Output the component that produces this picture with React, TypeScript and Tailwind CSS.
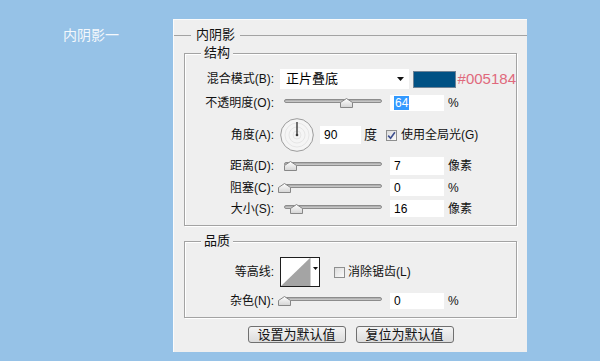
const FONT = "font-['Liberation_Sans','Noto_Sans_CJK_SC',sans-serif]";

function Thumb() {
  return (
    <svg width="13" height="10" viewBox="0 0 13 10" className="absolute top-[1px]">
      <defs>
        <linearGradient id="tg" x1="0" y1="0" x2="0" y2="1">
          <stop offset="0" stopColor="#ffffff" />
          <stop offset="1" stopColor="#d4d4d4" />
        </linearGradient>
      </defs>
      <polygon points="0.5,9.5 0.5,4.5 6.5,0.5 12.5,4.5 12.5,9.5" fill="url(#tg)" stroke="#878787" />
    </svg>
  );
}

// slider: 106px wide, track starts 6px in, thumb centre at `at`
function Slider({ at }: { at: number }) {
  return (
    <div className="relative ml-[4px] h-[12px] w-[106px] shrink-0">
      <div className="absolute left-[6px] top-[2px] h-[4px] w-[98px] rounded-[2px] border border-[#8c8c8c] bg-gradient-to-b from-[#a8a8a8] to-[#cfcfcf]" />
      <div className="absolute top-0 h-full" style={{ left: at - 6 }}>
        <Thumb />
      </div>
    </div>
  );
}

function Field({ value, h = 17, w = 54, ml = 6, selected = false }: { value: string; h?: number; w?: number; ml?: number; selected?: boolean }) {
  return (
    <div
      className="flex shrink-0 items-center bg-white pl-[4px] text-[12px] text-black"
      style={{ height: h, width: w, marginLeft: ml }}
    >
      {selected ? <span className="bg-[#3399ff] px-[1px] leading-[14px] text-white">{value}</span> : value}
    </div>
  );
}

function Label({ children }: { children: React.ReactNode }) {
  return <div className="w-[89px] shrink-0 text-right text-[12px] text-[#111]">{children}</div>;
}

function Unit({ children }: { children: React.ReactNode }) {
  return <div className="ml-[4px] text-[12px] text-[#111]">{children}</div>;
}

function Check({ on }: { on?: boolean }) {
  return (
    <div className="flex h-[11px] w-[11px] shrink-0 items-center justify-center border border-[#8e8f8f] bg-gradient-to-br from-[#dcdcdc] to-[#fbfbfb]">
      {on && (
        <svg width="9" height="9" viewBox="0 0 9 9">
          <path d="M1.2 4.6 L3.6 7.3 L7.9 1.2" fill="none" stroke="#3d4f8f" strokeWidth="1.6" />
        </svg>
      )}
    </div>
  );
}

function Group({ title, className, children }: { title: string; className?: string; children: React.ReactNode }) {
  return (
    <div className={`relative mx-[10px] border border-[#a3a3a3] shadow-[1px_1px_0_#fff,inset_1px_1px_0_#fff] ${className ?? ''}`}>
      <span className="absolute left-[16px] top-[-9px] bg-[#efefef] px-[3px] text-[13px] leading-[16px] text-[#111]">
        {title}
      </span>
      {children}
    </div>
  );
}

export default function App() {
  return (
    <div className={`flex h-[361px] w-[600px] bg-[#96c2e7] ${FONT}`}>
      <div className="w-[173px] shrink-0 pl-[63px] pt-[26px] text-[14px] leading-[18px] text-[#f4f8fc]">内阴影一</div>

      <div className="mt-[19px] flex h-[333px] w-[354px] shrink-0 flex-col border-l border-t border-[#fbfbfb] bg-[#efefef]">
        {/* heading */}
        <div className="mt-[7px] flex h-[16px] items-center">
          <div className="h-px w-[17px] bg-[#a3a3a3]" />
          <span className="mx-[5px] text-[13px] leading-[16px] text-[#111]">内阴影</span>
          <div className="h-px flex-1 bg-[#a3a3a3]" />
        </div>

        <Group title="结构" className="mt-[10px] pb-[8px] pt-[15px]">
          {/* blend mode */}
          <div className="flex h-[20px] items-center">
            <Label>混合模式(B):</Label>
            <div className="ml-[6px] flex h-[20px] w-[131px] items-center justify-between bg-white pl-[6px] pr-[5px] text-[13px] text-black">
              <span>正片叠底</span>
              <svg width="7" height="4" viewBox="0 0 7 4">
                <polygon points="0,0 7,0 3.5,4" fill="#111" />
              </svg>
            </div>
            <div className="ml-[4px] h-[17px] w-[43px] border border-[#6f8396] bg-[#005184]" />
            <span className="ml-[2px] text-[15px] leading-[18px] text-[#e0697c]">#005184</span>
          </div>

          {/* opacity */}
          <div className="mt-[6px] flex h-[16px] items-center">
            <Label>不透明度(O):</Label>
            <Slider at={68} />
            <Field value="64" h={16} selected />
            <Unit>%</Unit>
          </div>

          {/* angle */}
          <div className="mt-[7px] flex h-[34px] items-center">
            <Label>角度(A):</Label>
            <svg width="34" height="34" viewBox="0 0 34 34" className="ml-[6px] shrink-0">
              <circle cx="17" cy="17" r="16.3" fill="#f5f5f5" stroke="#9b9b9b" />
              <circle cx="17" cy="17" r="12" fill="none" stroke="#e6e6e6" />
              <circle cx="17" cy="17" r="8" fill="none" stroke="#e6e6e6" />
              <circle cx="17" cy="17" r="4" fill="none" stroke="#e6e6e6" />
              <line x1="17" y1="17" x2="17" y2="4" stroke="#3a3a3a" strokeWidth="1.4" />
              <circle cx="17" cy="17" r="1.3" fill="#3a3a3a" />
            </svg>
            <Field value="90" h={18} w={41} />
            <span className="ml-[3px] text-[13px] text-[#111]">度</span>
            <div className="ml-[9px] flex items-center">
              <Check on />
              <span className="ml-[4px] text-[12px] text-[#111]">使用全局光(G)</span>
            </div>
          </div>

          {/* distance */}
          <div className="mt-[5px] flex h-[18px] items-center">
            <Label>距离(D):</Label>
            <Slider at={12} />
            <Field value="7" h={18} />
            <Unit>像素</Unit>
          </div>

          {/* choke */}
          <div className="mt-[4px] flex h-[17px] items-center">
            <Label>阻塞(C):</Label>
            <Slider at={6} />
            <Field value="0" />
            <Unit>%</Unit>
          </div>

          {/* size */}
          <div className="mt-[4px] flex h-[17px] items-center">
            <Label>大小(S):</Label>
            <Slider at={18} />
            <Field value="16" />
            <Unit>像素</Unit>
          </div>
        </Group>

        <Group title="品质" className="mt-[15px] pb-[8px] pt-[15px]">
          <div className="flex h-[30px] items-center">
            <Label>等高线:</Label>
            <div className="ml-[6px] flex h-[30px] w-[40px] border border-[#1e1e1e] bg-white">
              <svg width="29" height="28" viewBox="0 0 29 28" className="shrink-0">
                <polygon points="0,28 29,0 29,28" fill="#a4a4a4" />
              </svg>
              <div className="flex flex-1 justify-center border-l border-[#d0d0d0] pt-[9px]">
                <svg width="5" height="3" viewBox="0 0 5 3">
                  <polygon points="0,0 5,0 2.5,3" fill="#111" />
                </svg>
              </div>
            </div>
            <div className="ml-[14px] flex items-center">
              <Check />
              <span className="ml-[3px] text-[12px] text-[#111]">消除锯齿(L)</span>
            </div>
          </div>

          <div className="mt-[6px] flex h-[16px] items-center">
            <Label>杂色(N):</Label>
            <Slider at={6} />
            <Field value="0" h={16} />
            <Unit>%</Unit>
          </div>
        </Group>

        <div className="mt-[8px] flex justify-center gap-[10px]">
          <button className="h-[17px] w-[98px] rounded-[3px] border border-[#707070] bg-gradient-to-b from-[#f4f4f4] to-[#dcdcdc] text-[13px] leading-[15px] text-[#111]">
            设置为默认值
          </button>
          <button className="h-[17px] w-[98px] rounded-[3px] border border-[#707070] bg-gradient-to-b from-[#f4f4f4] to-[#dcdcdc] text-[13px] leading-[15px] text-[#111]">
            复位为默认值
          </button>
        </div>
      </div>
    </div>
  );
}
